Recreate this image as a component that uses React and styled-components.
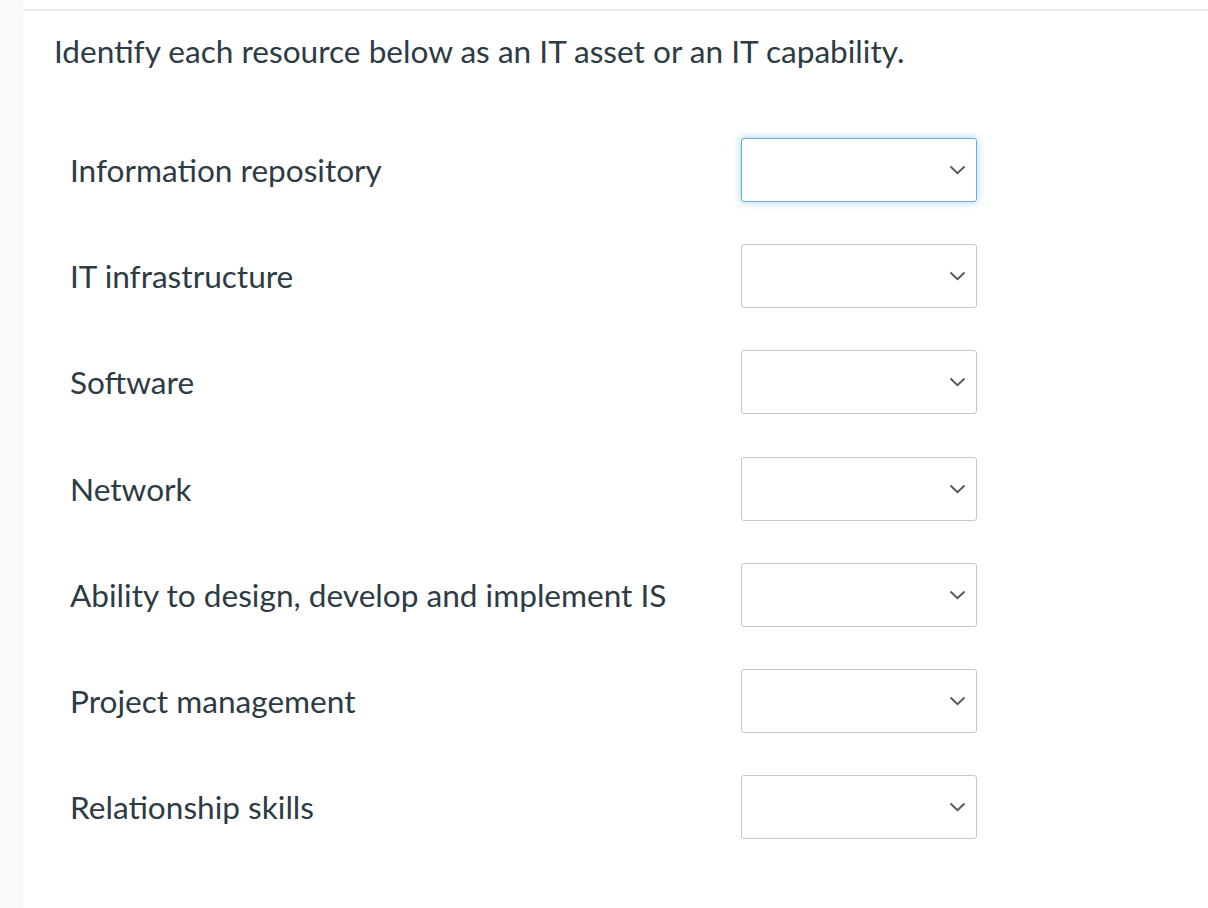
import React from 'react'
import styled, { createGlobalStyle } from 'styled-components'

const GlobalStyle = createGlobalStyle`
  html, body {
    margin: 0;
    padding: 0;
    background: #ffffff;
  }
  body {
    font-family: Lato, "Open Sans", sans-serif;
    color: #2d3b45;
  }
`

const Page = styled.div`
  display: flex;
  min-height: 908px;
`

const Gutter = styled.div`
  width: 23px;
  flex-shrink: 0;
  background: #fafafa;
`

const Main = styled.div`
  flex: 1;
  padding-top: 9px;
`

const Question = styled.div`
  border-top: 2px solid #ececec;
  padding: 20px 0 0 31px;
`

const Prompt = styled.p`
  margin: 0;
  font-size: 31.6px;
  line-height: 40px;
`

const Rows = styled.div`
  margin-top: 46px;
  padding-left: 16px;
  display: flex;
  flex-direction: column;
`

const Row = styled.div`
  display: grid;
  grid-template-columns: 671px 236px;
  align-items: center;
  height: 106.2px;
`

const Label = styled.span`
  font-size: 31.6px;
  line-height: 40px;
`

const SelectBox = styled.div`
  height: 64px;
  box-sizing: border-box;
  border: 1px solid ${({ $focused }) => ($focused ? '#66afe9' : '#c6c6c6')};
  border-radius: 3px;
  background: #fff;
  box-shadow: ${({ $focused }) =>
    $focused ? '0 0 8px rgba(102, 175, 233, 0.6)' : 'none'};
  display: flex;
  align-items: center;
  justify-content: flex-end;
  padding-right: 10px;
`

const Chevron = () => (
  <svg width="17" height="10" viewBox="0 0 17 10" fill="none">
    <path d="M1.5 1.5 L8.5 8.2 L15.5 1.5" stroke="#555" strokeWidth="1.8" />
  </svg>
)

const items = [
  'Information repository',
  'IT infrastructure',
  'Software',
  'Network',
  'Ability to design, develop and implement IS',
  'Project management',
  'Relationship skills',
]

export default function App() {
  return (
    <>
      <GlobalStyle />
      <Page>
        <Gutter />
        <Main>
          <Question>
            <Prompt>Identify each resource below as an IT asset or an IT capability.</Prompt>
            <Rows>
              {items.map((item, i) => (
                <Row key={item}>
                  <Label>{item}</Label>
                  <SelectBox $focused={i === 0}>
                    <Chevron />
                  </SelectBox>
                </Row>
              ))}
            </Rows>
          </Question>
        </Main>
      </Page>
    </>
  )
}
